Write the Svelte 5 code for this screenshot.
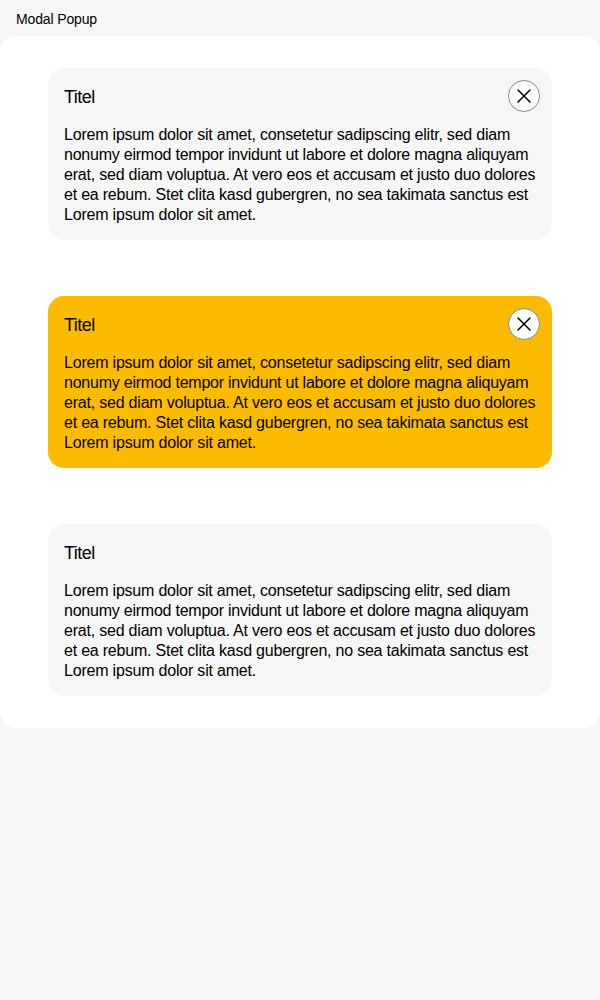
<script>
  const lines = [
    { text: 'Lorem ipsum dolor sit amet, consetetur sadipscing elitr, sed diam', tracking: -0.21 },
    { text: 'nonumy eirmod tempor invidunt ut labore et dolore magna aliquyam', tracking: -0.235 },
    { text: 'erat, sed diam voluptua. At vero eos et accusam et justo duo dolores', tracking: -0.21 },
    { text: 'et ea rebum. Stet clita kasd gubergren, no sea takimata sanctus est', tracking: -0.215 },
    { text: 'Lorem ipsum dolor sit amet.', tracking: -0.2 }
  ];
  const popups = [
    { tone: 'light', closable: true },
    { tone: 'amber', closable: true },
    { tone: 'light', closable: false }
  ];
</script>

<header>Modal Popup</header>
<main>
  {#each popups as popup}
    <section class={popup.tone}>
      <div class="head">
        <h2>Titel</h2>
        {#if popup.closable}
          <button aria-label="Close">
            <svg width="32" height="32" viewBox="0 0 32 32" fill="none">
              <circle cx="16" cy="16" r="15.5" fill="#fff" stroke="#878787" />
              <path d="M10 10 22 22M22 10 10 22" stroke="#000" stroke-width="1.5" stroke-linecap="round" />
            </svg>
          </button>
        {/if}
      </div>
      <p>
        {#each lines as line}<span style="letter-spacing: {line.tracking}px">{line.text}</span>{/each}
      </p>
    </section>
  {/each}
</main>

<style>
  :global(body) { background: #f6f6f6; }
  header, main { font-family: "Liberation Sans", Arial, sans-serif; color: #000; }
  header { height: 36px; box-sizing: border-box; padding: 11px 16px 0; font-size: 14px; line-height: 17px; letter-spacing: -0.14px; }
  main { background: #fff; border-radius: 16px; padding: 32px 48px; display: flex; flex-direction: column; gap: 56px; }
  section { height: 172px; box-sizing: border-box; border-radius: 16px; padding: 12px 12px 0 16px; }
  .light { background: #f6f6f6; }
  .amber { background: #fdbb00; }
  .head { display: flex; justify-content: space-between; height: 45px; }
  h2 { margin: 5px 0 0; font-size: 18px; line-height: 24px; font-weight: 400; letter-spacing: -0.55px; }
  button { width: 32px; height: 32px; padding: 0; border: 0; background: none; }
  svg { display: block; }
  p { margin: 0; font-size: 16px; line-height: 20px; }
  span { display: block; white-space: nowrap; }
</style>
